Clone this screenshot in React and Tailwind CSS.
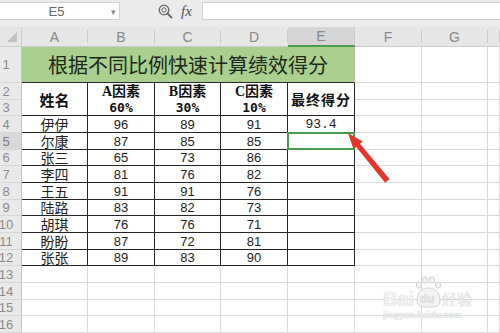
import React from 'react';

const data = [
  ['伊伊', '96', '89', '91', '93.4'],
  ['尔康', '87', '85', '85', ''],
  ['张三', '65', '73', '86', ''],
  ['李四', '81', '76', '82', ''],
  ['王五', '91', '91', '76', ''],
  ['陆路', '83', '82', '73', ''],
  ['胡琪', '76', '76', '71', ''],
  ['盼盼', '87', '72', '81', ''],
  ['张张', '89', '83', '90', ''],
];

const letters = ['A', 'B', 'C', 'D', 'E', 'F', 'G', ''];

const rowHead = 'flex items-center justify-center pr-[9px] bg-[#e9e9e9] border-r border-b border-r-[#c4c4c4] border-b-[#d6d6d6] text-[13px] text-[#8a8a8a] font-["Liberation_Sans",sans-serif] leading-none';
const rowHeadSel = 'flex items-center justify-center pr-[9px] bg-[#d9d9d9] border-r border-b border-r-[#c4c4c4] border-b-[#d6d6d6] text-[13px] text-[#7a7a7a] font-["Liberation_Sans",sans-serif] leading-none';
const grey = 'border-r border-b border-[#d9d9d9] bg-white';
const blk = 'flex items-center justify-center border-r border-b border-[#262626] bg-white leading-none';
const cjk = 'font-["Noto_Sans_CJK_SC",sans-serif]';
const num = 'font-["Liberation_Sans",sans-serif] text-[13px] text-[#222]';

export default function App() {
  const cells = [];
  // column header row
  cells.push(
    <div key="corner" className="flex items-end justify-end pb-[4px] pr-[4px] bg-[#e6e6e6] border-b border-r border-b-[#cdcdcd] border-r-[#cdcdcd]">
      <div className="w-0 h-0 border-l-[10px] border-l-transparent border-b-[10px] border-b-[#c2c2c2]" />
    </div>
  );
  letters.forEach((l, i) => {
    const sel = l === 'E';
    cells.push(
      <div
        key={'h' + i}
        className={
          sel
            ? 'flex items-center bg-[#d6d6d6] border-b-2 border-[#4f9a4f]'
            : 'flex items-center bg-[#e6e6e6] border-b border-[#cdcdcd]'
        }
      >
        <span className='flex-1 text-center text-[14px] text-[#888] font-["Liberation_Sans",sans-serif] leading-none'>{l}</span>
        <span className="w-px h-[13px] bg-[#cacaca]" />
      </div>
    );
  });

  // row 1
  cells.push(<div key="r1" className={rowHead}>1</div>);
  cells.push(
    <div
      key="title"
      className={'col-span-5 flex items-center justify-center bg-[#a9d08e] border-r border-b border-r-[#b8c9ad] border-b-[#2a2a2a] text-[20px] text-[#1c281c] leading-none ' + cjk}
    >
      根据不同比例快速计算绩效得分
    </div>
  );
  for (let i = 0; i < 3; i++) cells.push(<div key={'r1g' + i} className={grey} />);

  // row 2
  cells.push(<div key="r2" className={rowHead}>2</div>);
  cells.push(
    <div key="name" className={'row-span-2 ' + blk + ' text-[15px] font-bold text-[#111] ' + cjk}>姓名</div>
  );
  ['A因素', 'B因素', 'C因素'].forEach((t) => {
    cells.push(
      <div
        key={t}
        className='flex items-end justify-center pb-[1px] border-r border-[#262626] bg-white text-[14px] font-bold text-[#111] leading-none font-["Liberation_Serif","Noto_Sans_CJK_SC",serif]'
      >
        {t}
      </div>
    );
  });
  cells.push(
    <div key="final" className={'row-span-2 ' + blk + ' text-[14px] font-bold text-[#111] tracking-[1px] ' + cjk}>最终得分</div>
  );
  for (let i = 0; i < 3; i++) cells.push(<div key={'r2g' + i} className={grey} />);

  // row 3
  cells.push(<div key="r3" className={rowHead}>3</div>);
  ['60%', '30%', '10%'].forEach((t) => {
    cells.push(
      <div
        key={t}
        className='flex items-center justify-center border-r border-b border-[#262626] bg-white text-[13px] font-bold text-[#111] leading-none font-["DejaVu_Sans_Mono",monospace]'
      >
        {t}
      </div>
    );
  });
  for (let i = 0; i < 3; i++) cells.push(<div key={'r3g' + i} className={grey} />);

  // data rows 4-12
  data.forEach((row, ri) => {
    const rn = ri + 4;
    cells.push(
      <div key={'rh' + rn} className={rn === 5 ? rowHeadSel : rowHead}>
        {rn}
      </div>
    );
    row.forEach((v, ci) => {
      if (ci === 0) {
        cells.push(
          <div key={rn + '-' + ci} className={blk + ' text-[14px] text-[#222] ' + cjk}>
            <span className="block h-[15px] leading-[15px] overflow-visible">{v}</span>
          </div>
        );
      } else if (ci === 4) {
        cells.push(
          <div key={rn + '-' + ci} className={'relative ' + blk + ' text-[13px] text-[#222] font-["Liberation_Mono",monospace]'}>
            {v}
            {rn === 5 && (
              <div className="absolute -left-[1px] -top-[1px] -right-[1px] -bottom-[1px] border-2 border-[#4c9a4c]" />
            )}
          </div>
        );
      } else {
        cells.push(
          <div key={rn + '-' + ci} className={blk + ' ' + num}>{v}</div>
        );
      }
    });
    for (let i = 0; i < 3; i++) cells.push(<div key={rn + 'g' + i} className={grey} />);
  });

  // empty rows 13-16
  [13, 14, 15, 16].forEach((rn) => {
    cells.push(<div key={'rh' + rn} className={rowHead}>{rn}</div>);
    for (let i = 0; i < 8; i++) cells.push(<div key={rn + 'e' + i} className={grey} />);
  });

  return (
    <div className="relative w-[500px] h-[333px] overflow-hidden bg-white">
      {/* toolbar */}
      <div className="flex items-start h-[27px] bg-[#ebebeb] pt-[2px]">
        <div className="relative flex items-center w-[120px] h-[18px] bg-white border border-[#d2d2d2] border-l-0">
          <span className='flex-1 text-center pl-[2px] text-[13px] text-[#666] leading-none font-["Liberation_Sans",sans-serif]'>E5</span>
          <span className="w-[8px] text-[9px] text-[#888] leading-none">▾</span>
        </div>
        <div className="flex items-center w-[82px] h-[18px] pl-[38px] gap-[8px]">
          <svg width="15" height="15" viewBox="0 0 15 15">
            <circle cx="6" cy="6" r="4.8" fill="none" stroke="#666" strokeWidth="1.3" />
            <circle cx="6" cy="6" r="2.2" fill="none" stroke="#666" strokeWidth="1" />
            <line x1="9.5" y1="9.5" x2="13.5" y2="13.5" stroke="#666" strokeWidth="1.8" strokeLinecap="round" />
          </svg>
          <span className='text-[15px] italic text-[#555] leading-none font-["Liberation_Serif",serif]'>fx</span>
        </div>
        <div className="flex-1 h-[18px] bg-white border border-[#d2d2d2] border-r-0" />
      </div>

      {/* grid */}
      <div className="grid grid-cols-[22px_66px_67px_66px_67px_67px_67px_66px_12px] grid-rows-[20px_36px_17px_16px_17px_17px_16px_17px_17px_16px_17px_17px_16px_17px_17px_16px_17px]">
        {cells}
      </div>

      {/* red arrow */}
      <svg className="absolute left-0 top-0 pointer-events-none" width="500" height="333" viewBox="0 0 500 333">
        <polygon
          points="348,133 362.7,141.6 360,143.8 389.5,179 385.2,182.8 356.2,147 353.5,149.2"
          fill="#e2372a"
        />
      </svg>

      {/* baidu watermark */}
      <div className="absolute left-[382px] top-[276px] w-[100px] h-[50px] pointer-events-none">
        <svg className="absolute left-0 top-0" width="100" height="50" viewBox="0 0 100 50">
          <g fill="#f4f4f4" stroke="#d2d2d2" strokeWidth="1">
            <ellipse cx="37" cy="9" rx="2.6" ry="3.2" />
            <ellipse cx="43" cy="4" rx="2.6" ry="3.2" />
            <ellipse cx="50" cy="4" rx="2.6" ry="3.2" />
            <ellipse cx="56" cy="9" rx="2.6" ry="3.2" />
            <path d="M35 25 C35 15 41 12 46.5 12 C52 12 58 15 58 25 C58 31 53 31 46.5 31 C40 31 35 31 35 25 Z" />
          </g>
        </svg>
        <span className='absolute left-[1px] top-[13px] text-[20px] font-bold text-[#f2f2f2] leading-none font-["Liberation_Sans",sans-serif] [text-shadow:0_0_1px_#bdbdbd]'>Bai</span>
        <span className='absolute left-[38px] top-[17px] text-[12px] font-bold text-[#e4e4e4] leading-none font-["Liberation_Sans",sans-serif] [text-shadow:0_0_1px_#bdbdbd]'>du</span>
        <span className={'absolute left-[60px] top-[15px] text-[15px] text-[#f0f0f0] leading-none [text-shadow:0_0_1px_#b8b8b8] ' + cjk}>经验</span>
        <span className='absolute left-[1px] top-[35px] text-[9px] font-bold text-[#eeeeee] leading-none font-["Liberation_Sans",sans-serif] [text-shadow:0_0_1px_#c4c4c4]'>jingyan.baidu.com</span>
      </div>
    </div>
  );
}
